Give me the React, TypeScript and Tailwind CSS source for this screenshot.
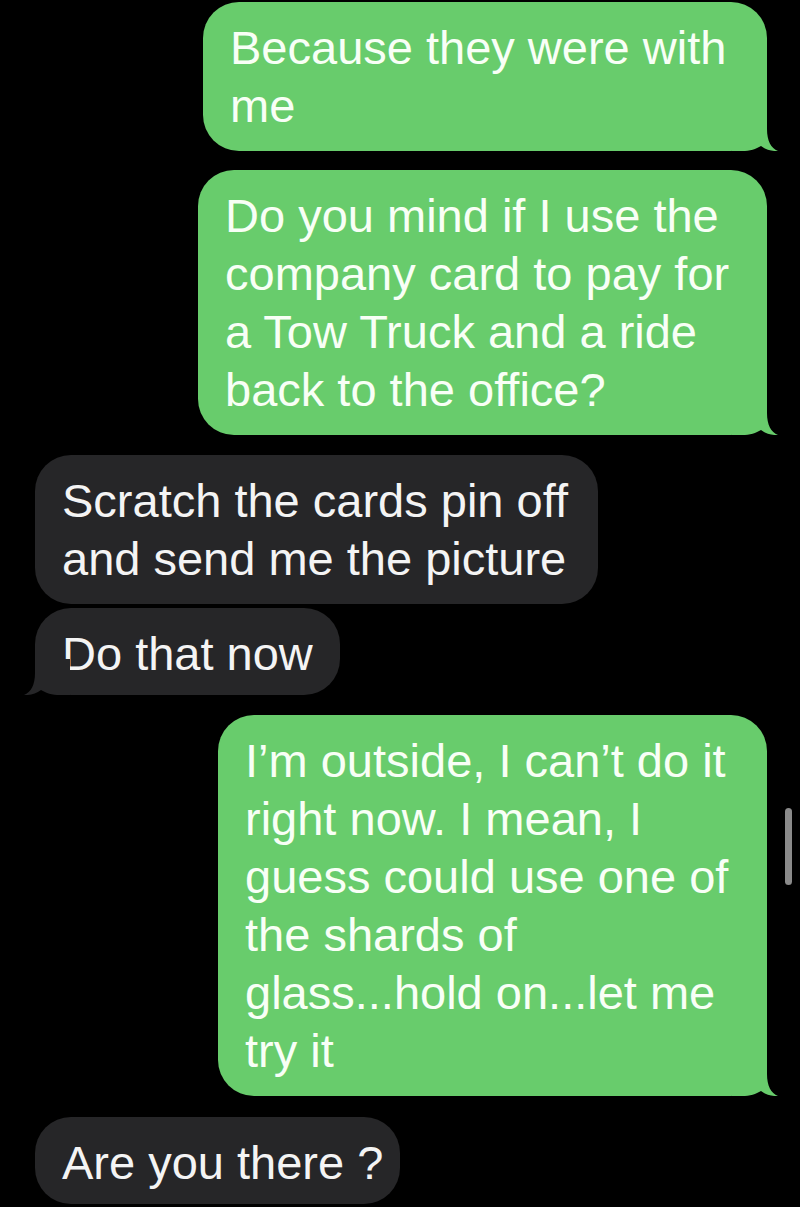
type Msg = {
  from: 'me' | 'them';
  lines: string[];
  width: number;
  tail: boolean;
  gap: number;
};

const messages: Msg[] = [
  { from: 'me', lines: ['Because they were with', 'me'], width: 564, tail: true, gap: 2 },
  {
    from: 'me',
    lines: ['Do you mind if I use the', 'company card to pay for', 'a Tow Truck and a ride', 'back to the office?'],
    width: 569,
    tail: true,
    gap: 19,
  },
  { from: 'them', lines: ['Scratch the cards pin off', 'and send me the picture'], width: 563, tail: false, gap: 20 },
  { from: 'them', lines: ['Do that now'], width: 305, tail: true, gap: 4 },
  {
    from: 'me',
    lines: [
      'I’m outside, I can’t do it',
      'right now. I mean, I',
      'guess could use one of',
      'the shards of',
      'glass...hold on...let me',
      'try it',
    ],
    width: 549,
    tail: true,
    gap: 20,
  },
  { from: 'them', lines: ['Are you there ?'], width: 365, tail: false, gap: 21 },
];

function Tail({ side, color }: { side: 'left' | 'right'; color: string }) {
  return (
    <svg
      width="46"
      height="36"
      viewBox="0 0 46 36"
      className={
        side === 'right'
          ? 'absolute bottom-0 right-[-11px]'
          : 'absolute bottom-0 left-[-11px] -scale-x-100'
      }
    >
      <path
        d="M35 0 L35 14 C35 26 39 33 46 36 C40 36.5 34 34.5 29 31 C24 34 18 36 10 36 L0 36 L0 0 Z"
        fill={color}
      />
    </svg>
  );
}

function Bubble({ msg }: { msg: Msg }) {
  const mine = msg.from === 'me';
  const color = mine ? '#68cc6c' : '#262628';
  const single = msg.lines.length === 1;
  return (
    <div
      className={mine ? 'flex justify-end pr-[33px]' : 'flex justify-start pl-[35px]'}
      style={{ marginTop: msg.gap }}
    >
      <div
        className={
          'relative rounded-[36px] px-[27px] pt-[17px] text-[47px] leading-[58px] whitespace-nowrap ' +
          (single ? 'pb-[12px] ' : 'pb-[16px] ') +
          (mine ? 'bg-[#68cc6c] text-[#f8fff6]' : 'bg-[#262628] text-[#f4f4f4]')
        }
        style={{ width: msg.width }}
      >
        {msg.lines.map((l, i) => (
          <div key={i}>{l}</div>
        ))}
        {msg.tail && <Tail side={mine ? 'right' : 'left'} color={color} />}
      </div>
    </div>
  );
}

export default function App() {
  return (
    <div className="relative h-[1207px] w-[800px] overflow-hidden bg-black font-['Liberation_Sans','Arial',sans-serif]">
      {messages.map((m, i) => (
        <Bubble key={i} msg={m} />
      ))}
      {/* scroll indicator */}
      <div className="absolute left-[785px] top-[808px] h-[77px] w-[7px] rounded-full bg-[#8a8a8a]" />
    </div>
  );
}
